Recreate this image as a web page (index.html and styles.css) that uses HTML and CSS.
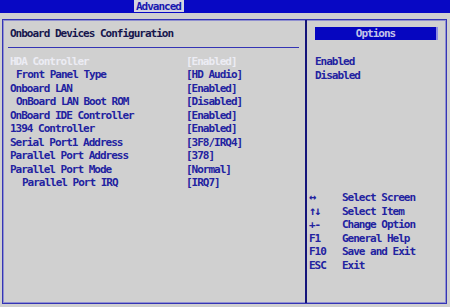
FILE: index.html
```html
<!DOCTYPE html>
<html lang="en">
<head>
  <meta charset="UTF-8" />
  <meta name="viewport" content="width=device-width, initial-scale=1.0"/>
  <title>BIOS Setup - Advanced</title>
  <link rel="stylesheet" href="styles.css">
</head>
<body>
  <div class="topbar">
    <span class="tab">Advanced</span>
  </div>

  <div class="frame">
    <div class="main">
      <div class="title">Onboard Devices Configuration</div>
      <div class="rule"></div>

      <div class="items">
        <div class="item selected"><span class="label">HDA Controller</span><span class="value">[Enabled]</span></div>
        <div class="item"><span class="label sub">Front Panel Type</span><span class="value">[HD Audio]</span></div>
        <div class="item"><span class="label">Onboard LAN</span><span class="value">[Enabled]</span></div>
        <div class="item"><span class="label sub">OnBoard LAN Boot ROM</span><span class="value">[Disabled]</span></div>
        <div class="item"><span class="label">OnBoard IDE Controller</span><span class="value">[Enabled]</span></div>
        <div class="item"><span class="label">1394 Controller</span><span class="value">[Enabled]</span></div>
        <div class="item"><span class="label">Serial Port1 Address</span><span class="value">[3F8/IRQ4]</span></div>
        <div class="item"><span class="label">Parallel Port Address</span><span class="value">[378]</span></div>
        <div class="item"><span class="label">Parallel Port Mode</span><span class="value">[Normal]</span></div>
        <div class="item"><span class="label sub2">Parallel Port IRQ</span><span class="value">[IRQ7]</span></div>
      </div>
    </div>

    <div class="side">
      <div class="options">Options</div>
      <div class="choices">
        <div>Enabled</div>
        <div>Disabled</div>
      </div>

      <div class="help">
        <div class="key arrow">↔</div><div>Select Screen</div>
        <div class="key arrow">↑↓</div><div>Select Item</div>
        <div class="key">+-</div><div>Change Option</div>
        <div class="key">F1</div><div>General Help</div>
        <div class="key">F10</div><div>Save and Exit</div>
        <div class="key">ESC</div><div>Exit</div>
      </div>
    </div>
  </div>
</body>
</html>
```

FILE: styles.css
```css
body { margin: 0; width: 450px; height: 307px; overflow: hidden; background: #d0d0d0; color: #2222a0; font-family: "DejaVu Sans Mono", monospace; font-weight: bold; font-size: 11px; letter-spacing: -1px; line-height: 13.55px; }

.topbar { height: 13px; background: #0808c4; padding-left: 134px; display: flex; }
.tab { background: #d4d4e0; color: #1818b0; padding: 0 3px 0 2px; height: 12px; line-height: 13px; }

.frame { margin: 6px 3px 0 2px; height: 283px; border: 1px solid #3434b4; box-shadow: inset 0 0 0 1px #9090d0; display: flex; }

.main { width: 291px; padding: 7px 6px 0 5px; border-right: 2px solid #14147a; }
.title { padding-left: 2px; color: #16164c; }
.rule { height: 1px; background: #3434b4; margin-top: 6px; }

.items { margin-top: 7px; padding-left: 2px; }
.item { display: grid; grid-template-columns: 176px auto; }
.item.selected { color: #ececf4; }
.sub { padding-left: 6px; }
.sub2 { padding-left: 12px; }

.side { flex: 1; padding: 7px 0 0 1px; }
.options { margin-left: 7px; width: 121px; height: 13px; line-height: 13px; background: #0606c0; color: #c4c4e8; text-align: center; border-right: 2px solid #8c8ce0; }
.choices { margin: 15px 0 0 7px; }

.help { display: grid; grid-template-columns: 34px auto; margin-top: 109px; }
.key { padding-left: 1px; }
.arrow { font-size: 12px; letter-spacing: -2px; }
```
